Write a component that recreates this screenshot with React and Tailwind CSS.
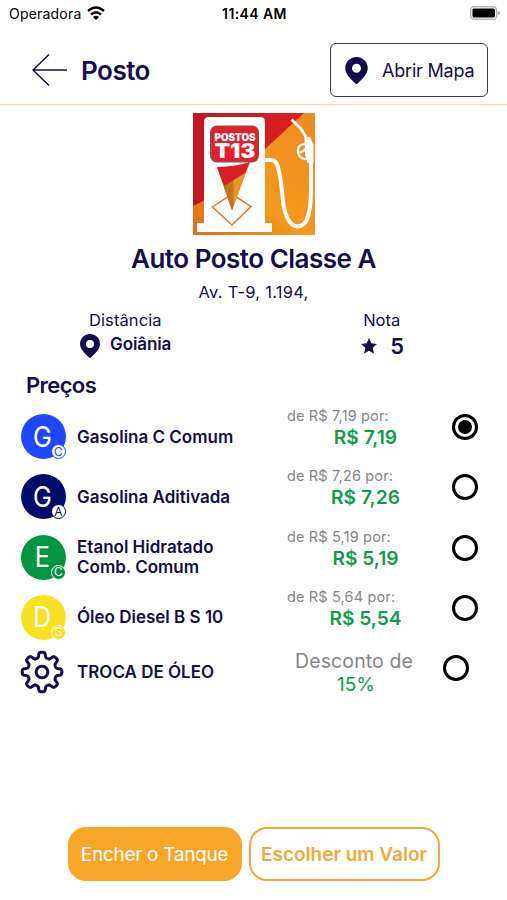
import React, { useState } from 'react';

const fuels = [
  { id: 1, letter: 'G', badge: 'C', name: 'Gasolina C Comum', from: '7,19', price: '7,19', bg: 'bg-[#1f48fb]', badgeStyle: 'bg-white border-[#1f48fb] text-[#1f48fb]' },
  { id: 2, letter: 'G', badge: 'A', name: 'Gasolina Aditivada', from: '7,26', price: '7,26', bg: 'bg-[#000c6c]', badgeStyle: 'bg-white border-[#000c6c] text-[#000c6c]' },
  { id: 3, letter: 'E', badge: 'C', name: 'Etanol Hidratado Comb. Comum', from: '5,19', price: '5,19', bg: 'bg-[#00963f]', badgeStyle: 'bg-[#00963f] border-white text-white' },
  { id: 4, letter: 'D', badge: 'S', name: 'Óleo Diesel B S 10', from: '5,64', price: '5,54', bg: 'bg-[#f9e021]', badgeStyle: 'bg-[#f9e021] border-white text-white' }
];

const Pin = ({ className }) => (
  <svg viewBox="0 0 20 24" className={className} fill="currentColor">
    <path fillRule="evenodd" d="M10 0C4.4 0 0 4.4 0 9.8c0 4.6 3.2 8.4 9 13.8.6.5 1.4.5 2 0 5.8-5.4 9-9.2 9-13.8C20 4.4 15.6 0 10 0Zm0 6a4 4 0 1 1 0 8 4 4 0 0 1 0-8Z" />
  </svg>
);

const StationLogo = () => (
  <svg viewBox="0 0 122 122" className="w-[122px] h-[122px] block">
    <defs>
      <linearGradient id="orange" x1="0" y1="1" x2="1" y2="0">
        <stop offset="0" stopColor="#e66a18" />
        <stop offset="0.45" stopColor="#f39a1c" />
        <stop offset="1" stopColor="#ee8a20" />
      </linearGradient>
      <linearGradient id="red" x1="0" y1="0" x2="1" y2="0">
        <stop offset="0" stopColor="#c31520" />
        <stop offset="1" stopColor="#db1f24" />
      </linearGradient>
      <linearGradient id="wedge" x1="0" y1="0" x2="1" y2="0">
        <stop offset="0.48" stopColor="#c9731a" />
        <stop offset="0.52" stopColor="#e79a20" />
      </linearGradient>
    </defs>
    <rect width="122" height="122" fill="url(#orange)" />
    <path d="M0 0H111L71 37L14 86L0 93Z" fill="url(#red)" />
    <path d="M11 110V9Q11 4 16 4H67Q72 4 72 9V110H79V119H4V110Z" fill="#fff" />
    <path d="M72 47H78Q83 47 85 54Q88 65 89 78C90 98 95 113.5 105 113.5C115 113 118 98 118 76V48" fill="none" stroke="#fff" strokeWidth="4" />
    <path d="M98.500 6.500L108 16L113 24" fill="none" stroke="#fff" strokeWidth="2.8" />
    <path d="M111.500 24H117L120.500 32V50H114.500L112 41Z" fill="#fff" />
    <path d="M112.500 31Q104 31 105 40Q107 46.500 114 46M107 40L113 36" fill="none" stroke="#fff" strokeWidth="2.2" />
    <rect x="17" y="12.5" width="49" height="37" rx="7" fill="#8f4a4e" />
    <rect x="18.5" y="13.5" width="46.5" height="34.5" rx="6" fill="#e31f2b" />
    <text fontFamily="Inter, sans-serif" fontWeight="900" fill="#fff">
      <tspan x="21.5" y="27.5" textLength="41" lengthAdjust="spacingAndGlyphs" fontSize="10.5">POSTOS</tspan>
      <tspan x="21.5" y="45" textLength="41" lengthAdjust="spacingAndGlyphs" fontSize="20">T13</tspan>
    </text>
    <path d="M39 81L58 93.500L39 112L19.500 94Z" fill="none" stroke="#df762c" strokeWidth="1.5" />
    <path d="M24 54Q42 54 57 49L39 98Z" fill="url(#wedge)" />
    <path d="M24 54Q42 54 57 49L52 60L31 73Z" fill="#d71f27" />
  </svg>
);

// eight rounded teeth around a 44x44 box
const gearPoints = Array.from({ length: 241 }, (_, i) => {
  const a = (i / 240) * Math.PI * 2;
  const r = 17.2 + 2.7 * Math.tanh(2.2 * Math.cos(8 * a));
  return `${(22 + r * Math.sin(a)).toFixed(2)} ${(22 - r * Math.cos(a)).toFixed(2)}`;
});

const GearIcon = () => (
  <svg viewBox="0 0 44 44" className="w-11 h-11" fill="none" stroke="#140d4b" strokeWidth="3" strokeLinejoin="round">
    <path d={`M${gearPoints.join('L')}Z`} />
    <circle cx="22" cy="22" r="5.8" />
  </svg>
);

const Radio = ({ checked, onChange, label }) => (
  <button
    role="radio"
    aria-checked={checked}
    aria-label={label}
    onClick={onChange}
    className="w-[26px] h-[26px] shrink-0 rounded-full border-3 border-black flex items-center justify-center"
  >
    {checked && <span className="w-3.5 h-3.5 shrink-0 rounded-full bg-black" />}
  </button>
);

const StatusBar = () => (
  <div className="h-7 shrink-0 grid grid-cols-3 items-center pl-[9px] pr-[7px] text-black">
    <div className="flex items-center gap-1.5">
      <span className="text-[14px] leading-5 tracking-[0.2px]">Operadora</span>
      <svg viewBox="0 0 18 14" className="w-[18px] h-[14px] -mt-0.5" fill="none" stroke="black" strokeWidth="2.4">
        <path d="M1 5Q9-2 17 5M4 8.500Q9 4 14 8.500" />
        <path d="M9 14L6 11Q9 8.500 12 11Z" fill="black" stroke="none" />
      </svg>
    </div>
    <div className="text-center text-[14px] leading-5 font-semibold tracking-[0.4px] whitespace-nowrap">11:44 AM</div>
    <svg viewBox="0 0 30 14" className="w-[30px] h-[14px] justify-self-end -mt-0.5">
      <rect x="0.7" y="0.7" width="26" height="12.6" rx="3.5" fill="#fff" stroke="#b5b5b5" strokeWidth="1.4" />
      <rect x="2.5" y="2.5" width="22.5" height="9" rx="1.5" fill="black" />
      <path d="M28 5Q30 5.500 30 7T28 9Z" fill="#aaa" />
    </svg>
  </div>
);

const App = () => {
  const [selected, setSelected] = useState(1);

  return (
    <div className="w-[507px] h-[900px] bg-white flex flex-col overflow-hidden text-[#140d4b] font-['Inter',sans-serif]">
      <StatusBar />

      <header className="h-[77px] shrink-0 flex items-center justify-between pl-8 pr-[19px] pt-[15px] pb-[7px] border-b border-[#f2d9ad]">
        <div className="flex items-center gap-[14px]">
          <button aria-label="Voltar">
            <svg viewBox="0 0 35 32" className="w-[35px] h-8" fill="none" stroke="currentColor" strokeWidth="1.5">
              <path d="M35 16H1M17 0.500L1 16L17 31.500" />
            </svg>
          </button>
          <h1 className="text-[26px] leading-8 font-semibold tracking-[-0.5px] mt-0.5">Posto</h1>
        </div>
        <button className="w-[158px] h-[54px] border border-[#3c3768] rounded-[6px] flex items-center pl-[14px] gap-[14px]">
          <Pin className="w-[23px] h-[27px]" />
          <span className="text-[18px] tracking-[-0.2px] whitespace-nowrap">Abrir Mapa</span>
        </button>
      </header>

      <section className="flex flex-col items-center pt-2">
        <StationLogo />
        <h2 className="mt-2 text-[26px] leading-8 font-semibold tracking-[-0.5px] whitespace-nowrap">Auto Posto Classe A</h2>
        <p className="mt-[7px] text-[16.5px] leading-5 tracking-[0.25px]">Av. T-9, 1.194,</p>
      </section>

      <section className="flex justify-between pl-20 pr-[103px] mt-2">
        <div>
          <p className="text-[16.5px] leading-5 pl-[9px] tracking-[0.1px]">Distância</p>
          <div className="flex items-center gap-[10px] h-[30px]">
            <Pin className="w-5 h-6 mt-0.5" />
            <span className="text-[17px] font-semibold tracking-[-0.1px]">Goiânia</span>
          </div>
        </div>
        <div>
          <p className="text-[16.5px] leading-5 pl-0.5">Nota</p>
          <div className="flex items-center gap-[13px] h-[33px]">
            <svg viewBox="0 0 24 24" className="w-4 h-4 -mt-0.5" fill="currentColor">
              <path d="M12 0L15.500 8L24 9L17.500 14.700L19.500 23.500L12 19L4.500 23.500L6.500 14.700L0 9L8.500 8Z" />
            </svg>
            <span className="text-[22px] font-semibold">5</span>
          </div>
        </div>
      </section>

      <h3 className="mt-2 pl-[26px] text-[22px] leading-7 font-semibold tracking-[-0.6px]">Preços</h3>

      <main className="mt-[7px]" role="radiogroup">
        {fuels.map(fuel => (
          <div key={fuel.id} className="h-[60.3px] flex items-start pl-[21px]">
            <div className={`relative mt-2 w-[45px] h-[45px] shrink-0 rounded-full flex items-center justify-center ${fuel.bg}`}>
              <span className="text-[28px] leading-none text-white -ml-0.5 scale-x-90">{fuel.letter}</span>
              <span className={`absolute left-[30px] top-[30px] w-[15px] h-[15px] rounded-full border flex items-center justify-center text-[12px] leading-none ${fuel.badgeStyle}`}>
                {fuel.badge}
              </span>
            </div>
            <div className="h-[61px] w-[190px] ml-[11px] shrink-0 flex items-center">
              <span className="w-[165px] text-[17px] leading-5 font-semibold">{fuel.name}</span>
            </div>
            <div className="w-[165px] ml-5 shrink-0">
              <p className="text-[14.5px] leading-5 tracking-[0.15px] text-[#858585] whitespace-nowrap">de R$ {fuel.from} por:</p>
              <p className="w-[157px] text-[19.2px] leading-[22px] font-semibold text-[#109d4a] text-center">R$ {fuel.price}</p>
            </div>
            <div className="mt-2">
              <Radio checked={selected === fuel.id} onChange={() => setSelected(fuel.id)} label={fuel.name} />
            </div>
          </div>
        ))}

        <div className="h-14 flex items-start pl-5">
          <div className="mt-[3px]">
            <GearIcon />
          </div>
          <span className="ml-[13px] mt-[15px] w-[209px] text-[17px] leading-5 font-semibold">TROCA DE ÓLEO</span>
          <div className="w-[136px] text-center leading-6 mt-[2px]">
            <p className="text-[19.5px] tracking-[0.1px] text-[#858585] whitespace-nowrap">Desconto de</p>
            <p className="text-[19px] pl-1 text-[#109d4a]">15%</p>
          </div>
          <div className="mt-2 ml-[21px]">
            <Radio checked={selected === 5} onChange={() => setSelected(5)} label="Troca de óleo" />
          </div>
        </div>
      </main>

      <footer className="mt-auto mb-[19px] flex justify-center gap-[7px]">
        <button className="w-[174px] h-[54px] rounded-[18px] pt-[2px] bg-[#f8a629] text-white text-[19px] tracking-[-0.3px] whitespace-nowrap">
          Encher o Tanque
        </button>
        <button className="w-[191px] h-[54px] rounded-[18px] pt-[2px] border-2 border-[#f3a93a] text-[#f3a93a] text-[19px] font-semibold whitespace-nowrap">
          Escolher um Valor
        </button>
      </footer>
    </div>
  );
};

export default App;
